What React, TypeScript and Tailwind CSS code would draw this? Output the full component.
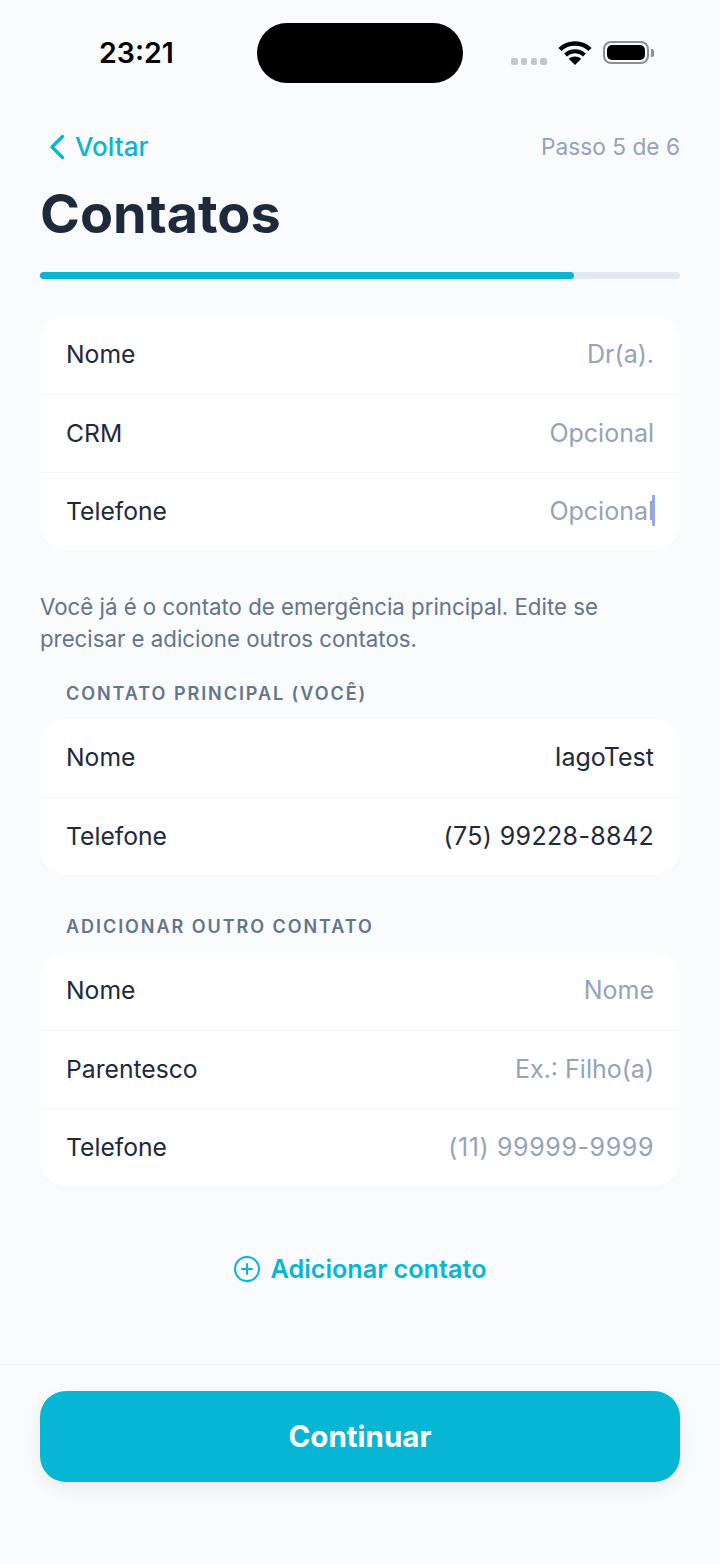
const fontStack = "font-['Inter','Liberation_Sans',sans-serif]";

interface Row {
  label: string;
  value: string;
  filled?: boolean;
  caret?: boolean;
  spacing?: string;
}

const doctorRows: Row[] = [
  { label: "Nome", value: "Dr(a)." },
  { label: "CRM", value: "Opcional" },
  { label: "Telefone", value: "Opcional", caret: true },
];

const mainRows: Row[] = [
  { label: "Nome", value: "IagoTest", filled: true },
  { label: "Telefone", value: "(75) 99228-8842", filled: true, spacing: "tracking-[0.35px]" },
];

const otherRows: Row[] = [
  { label: "Nome", value: "Nome" },
  { label: "Parentesco", value: "Ex.: Filho(a)" },
  { label: "Telefone", value: "(11) 99999-9999", spacing: "tracking-[0.6px]" },
];

const Card = ({ rows }: { rows: Row[] }) => (
  <div className="mx-10 rounded-[26px] bg-white shadow-[0_2px_10px_rgba(15,23,42,0.015)]">
    {rows.map((row, i) => (
      <div
        key={row.label}
        className={`flex h-[78px] items-center justify-between px-[26px] pb-[2px] ${
          i > 0 ? "border-t border-[#f3f5f8]" : ""
        }`}
      >
        <span className="text-[24.7px] leading-8 text-[#1e293b]">{row.label}</span>
        <span
          className={`relative text-[25px] leading-8 ${row.spacing ?? ""} ${
            row.filled ? "text-[#1e293b]" : "text-[#94a3b8]"
          }`}
        >
          {row.value}
          {row.caret && <span className="absolute -right-px top-0 h-[31px] w-[3px] bg-[#93a9ee]" />}
        </span>
      </div>
    ))}
  </div>
);

const SectionLabel = ({ children }: { children: string }) => (
  <div className="mx-[66px] text-[18px] font-semibold leading-6 tracking-[1.95px] text-[#64748b]">
    {children}
  </div>
);

export default function App() {
  return (
    <div className={`flex h-[1564px] w-[720px] flex-col overflow-hidden bg-[#f9fbfd] ${fontStack}`}>
      <div className="relative h-[106px] shrink-0">
        <span className="absolute left-[99px] top-[35px] text-[28.500px] font-semibold leading-9 text-black">
          23:21
        </span>
        <div className="absolute left-[257px] top-[23px] h-[60px] w-[206px] rounded-[30px] bg-black" />
        <div className="absolute left-[511px] top-[58px] flex gap-[3.300px]">
          <span className="h-[6.500px] w-[6.500px] rounded-[2px] bg-[#c4c6c9]" />
          <span className="h-[6.500px] w-[6.500px] rounded-[2px] bg-[#c4c6c9]" />
          <span className="h-[6.500px] w-[6.500px] rounded-[2px] bg-[#c4c6c9]" />
          <span className="h-[6.500px] w-[6.500px] rounded-[2px] bg-[#c4c6c9]" />
        </div>
        <svg className="absolute left-[558px] top-[40px]" width="34" height="26" viewBox="0 0 34 26">
          <path d="M2 9.500C10 1.500 24 1.500 32 9.500" fill="none" stroke="#000" strokeWidth="4.400" />
          <path d="M7.500 15C13 10 21 10 26.500 15" fill="none" stroke="#000" strokeWidth="4.200" />
          <path d="M17 25L10.800 18.800C14.500 15.800 19.500 15.800 23.200 18.800Z" fill="#000" />
        </svg>
        <div className="absolute left-[603px] top-[41px] flex items-center">
          <div className="h-[23px] w-[46px] rounded-[8px] border-2 border-[#8e8e90] p-[2px]">
            <div className="h-full w-full rounded-[5px] bg-black" />
          </div>
          <div className="ml-[2px] h-[8px] w-[3px] rounded-r-[2px] bg-[#8e8e90]" />
        </div>
      </div>

      <div className="mt-[27px] flex h-[28px] items-center justify-between pl-[48px] pr-10">
        <div className="flex items-center gap-[9px]">
          <svg width="18" height="26" viewBox="0 0 18 26">
            <path
              d="M14.500 2.500L4 13L14.500 23.500"
              fill="none"
              stroke="#06b6d4"
              strokeWidth="3.200"
              strokeLinecap="round"
              strokeLinejoin="round"
            />
          </svg>
          <span className="text-[26px] font-medium leading-8 text-[#06b6d4]">Voltar</span>
        </div>
        <span className="text-[22.700px] leading-7 text-[#94a3b8]">Passo 5 de 6</span>
      </div>

      <h1 className="mx-10 mt-[21px] text-[54px] font-bold leading-[64px] text-[#1e293b]">Contatos</h1>

      <div className="mx-10 mt-[26px] h-[7px] shrink-0 rounded-full bg-[#e2e8f0]">
        <div className="h-full w-[534px] rounded-full bg-[#06b6d4]" />
      </div>

      <div className="mt-[37px]">
        <Card rows={doctorRows} />
      </div>

      <p className="mx-10 mt-[41px] text-[22.250px] leading-8 text-[#64748b]">
        Você já é o contato de emergência principal. Edite se precisar e adicione outros contatos.
      </p>

      <div className="mt-[27px]">
        <SectionLabel>CONTATO PRINCIPAL (VOCÊ)</SectionLabel>
      </div>
      <div className="mt-[13px]">
        <Card rows={mainRows} />
      </div>

      <div className="mt-[40px]">
        <SectionLabel>ADICIONAR OUTRO CONTATO</SectionLabel>
      </div>
      <div className="mt-[13px]">
        <Card rows={otherRows} />
      </div>

      <div className="mt-[67px] flex items-center justify-center gap-[11px]">
        <svg width="26" height="26" viewBox="0 0 26 26" fill="none" stroke="#06b6d4" strokeWidth="2" strokeLinecap="round">
          <circle cx="13" cy="13" r="12" />
          <path d="M13 8V18M8 13H18" />
        </svg>
        <span className="text-[25.200px] font-semibold leading-8 text-[#06b6d4]">Adicionar contato</span>
      </div>

      <div className="mt-[79px] flex-1 border-t border-[#eef1f5] px-10 pt-[26px]">
        <div className="flex h-[91px] items-center justify-center rounded-[26px] bg-[#06b6d4] shadow-[0_6px_20px_rgba(15,23,42,0.07)]">
          <span className="text-[29.500px] font-bold text-white">Continuar</span>
        </div>
      </div>
    </div>
  );
}
